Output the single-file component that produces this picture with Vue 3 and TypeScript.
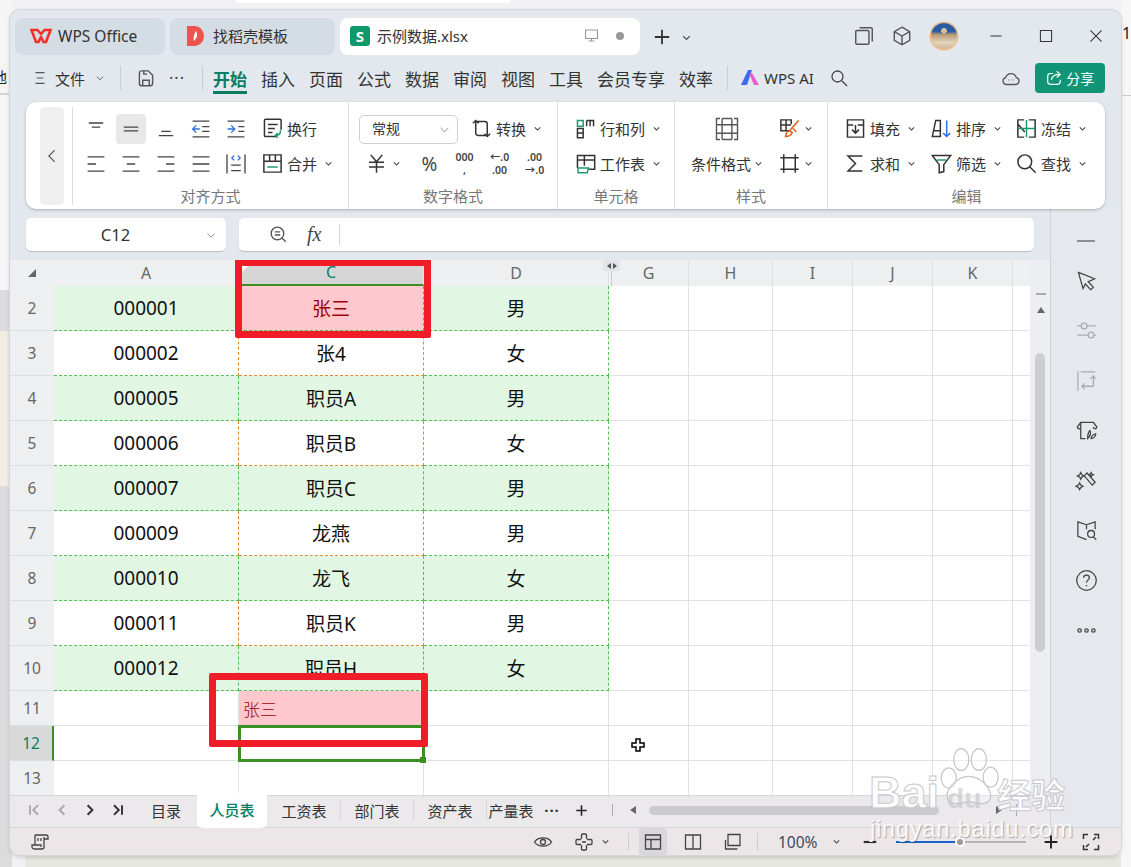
<script setup lang="ts">
import { h } from 'vue'

// icon table: [path, optional colour]
const BLUE = '#2f6fe0'
const GREEN = '#1f9a6c'
const ORANGE = '#d9601a'
const icons: Record<string, [string, string?][]> = {
  caret: [['M4 7.5l6 6 6-6']],
  chevL: [['M13 3.5l-6.5 6.5 6.5 6.5']],
  menu: [['M5 4h10M6.5 10h7M5 16h10']],
  save: [['M4 5.5a2 2 0 0 1 2-2h6l4 4v7.500a2 2 0 0 1-2 2H6a2 2 0 0 1-2-2zM7 17v-5h6v5M8 3.500v3h3']],
  plus: [['M2 10h16M10 2v16']],
  max: [['M3 3h14v14H3z']],
  min: [['M3 10h14']],
  close: [['M3 3l14 14M17 3L3 17']],
  monitor: [['M3 3.500h14v10H3zM10 13.500v3M6.500 16.500h7']],
  copy: [['M6 2.500h10.500a1 1 0 0 1 1 1V15M2.500 6a1 1 0 0 1 1-1h10a1 1 0 0 1 1 1v10.500a1 1 0 0 1-1 1h-10a1 1 0 0 1-1-1z']],
  cube: [['M10 2l7 4v8l-7 4-7-4V6zM3 6l7 4 7-4M10 10v8']],
  search: [['M8.500 3a5.500 5.500 0 1 0 0 11 5.500 5.500 0 0 0 0-11zM12.500 12.500L18 18']],
  cloud: [['M5.500 16.500a3.500 3.500 0 0 1-.800-6.900 5.500 5.500 0 0 1 10.600 0 3.500 3.500 0 0 1-.800 6.900z'], ['M7 12h.500M9.800 12h.500M12.500 12h.500']],
  share: [['M9 5H6a3 3 0 0 0-3 3v6a3 3 0 0 0 3 3h8a3 3 0 0 0 3-3v-2M7 12c1-4 4-6 9-6M13 2.500L17 6l-4 3.500']],
  alTop: [['M4 5h12M6.500 8.500h7']],
  alMid: [['M4 8.500h12M4 11.500h12']],
  alBot: [['M6 12h8M4 15.500h12']],
  indL: [['M3 3.500h14M3 16.500h14M11 8h6M11 12h6'], ['M9 10H3M6 7l-3 3 3 3', BLUE]],
  indR: [['M3 3.500h14M3 16.500h14M12 8h5M12 12h5'], ['M3 10h6M6 7l3 3-3 3', BLUE]],
  left: [['M3 4h14M3 10h7M3 16h14']],
  center: [['M3 4h14M6.500 10h7M3 16h14']],
  right: [['M3 4h14M10 10h7M3 16h14']],
  just: [['M3 4h14M3 10h14M3 16h14']],
  dist: [['M2.500 2v16M17.500 2v16M6 11h8M6 15.500h8'], ['M8.500 3L6.500 5l2 2M11.500 3l2 2-2 2', BLUE]],
  wrap: [['M14 17H4a1 1 0 0 1-1-1V3a1 1 0 0 1 1-1h12.500a1 1 0 0 1 1 1v8M6 6.500h8.500M6 10h6M6 13.500h4'], ['M17 11.500c0 3-1 4.500-4 4.500M14.500 14l-2 2 2 2', GREEN]],
  merge: [['M2.500 2.500h15v15h-15zM2.500 8h15M7.500 2.500V8M12.500 2.500V8'], ['M5.500 13h9', GREEN]],
  convert: [['M5 3v11a2 2 0 0 0 2 2h9M2.500 5.500L5 3l2.500 2.500M15 17V6a2 2 0 0 0-2-2H5M17.500 14.500L15 17l-2.500-2.500']],
  yen: [['M5 2.500l5 6 5-6M3.500 9h13M3.500 13h13M10 9v9']],
  rowcol: [['M8 10H3V18H8zM3 14h5M11 3h6v5M14 3v5M11 3v5'], ['M3 3h5v5H3z', GREEN]],
  sheet: [['M3 14V3h15v12H13M3 7h15M9 3v9'], ['M3.500 14h9l-1 4h-8z', GREEN]],
  cond: [['M5 2.500H2.500v15H5M15 2.500h2.500v15H15M6.500 2.500h7M6.500 17.500h7M2.500 7h4M2.500 13h4M6.500 2.500v15M13.500 2.500v15M17.500 7h-4M17.500 13h-4M6.500 7h7v6h-7']],
  brush: [['M11 12H2.500V2.500h9V6M2.500 7h9M7 2.500V12'], ['M18 3l-8 9M10 12c-2 0-3 2-3.500 5 3 0 5-1 6-3.500zM13 10l3 3', ORANGE]],
  border: [['M5 2v16M15 2v16M2 5h16M2 15h16']],
  fill: [['M3 2.500h14v15H3zM3 7h5M12 7h5M10 7v7M7 11l3 3 3-3']],
  sort: [['M2 17L5 3h4v14zM3 12h6'], ['M14.500 3v14M11.500 14l3 3 3-3', BLUE]],
  freeze: [['M8 2.500H2.500v15H8M12 2.500h5.500v15H12M2.500 6l6 7'], ['M2.500 10h15M10 2.500v15', GREEN]],
  sum: [['M16 3.500H3.500L10 10l-6.500 6.500H16']],
  filter: [['M2 3h16l-6 8v6l-4 1v-7z'], ['M6 7h8', GREEN]],
  find: [['M8.500 2.500a6 6 0 1 0 0 12 6 6 0 0 0 0-12zM13 13l5 5']],
  zoomf: [['M9 3a6 6 0 1 0 0 12A6 6 0 0 0 9 3zM13.500 13.500L17 17M6.500 7.500h5M6.500 10.500h5']],
  pointer: [['M3 3l14 5.500-5.500 2.500 4.500 5-2.500 2-4.500-5-2 4z']],
  sliders: [['M2 6h4M10 6h8M2 14h10M16 14h2M8 3.500a2.500 2.500 0 1 0 0 5 2.500 2.500 0 0 0 0-5zM14 11.500a2.500 2.500 0 1 0 0 5 2.500 2.500 0 0 0 0-5z']],
  swap: [['M2.500 2v17M5 2.500h12.500M16 15V6M13.500 8.500L16 6l2 2.500M16 15H6M8.500 12.500L6 15l2.500 2.500']],
  shop: [['M5 8V3h11l3 4c0 2-3 2-3 0M5 3L2 7c0 2 3 2 3 0M5 8v9h4M11 17c0-4 1-6 2-7 1 2 0 5-2 7zM14 17c0-2 2-4 4-4 0 2-2 4-4 4z']],
  wand: [['M8 6l2.500-2.500 7 8L15 14zM5 3l1 2 2 1-2 1-1 2-1-2-2-1 2-1zM14 3l.700 1.500L16 5l-1.300.7L14 7l-.700-1.300L12 5l1.300-.5zM4 12l1 2 2 1-2 1-1 2-1-2-2-1 2-1z']],
  book: [['M10 5L2.500 2.500V15l7.500 3M10 5l7.500-2.500V9M10 5v4M14 10a3 3 0 1 0 0 6 3 3 0 0 0 0-6zM16 15.500L18.500 18']],
  help: [['M10 1.500a8.500 8.500 0 1 0 0 17 8.500 8.500 0 0 0 0-17zM7.500 7.500C7.500 4.500 12.500 4.500 12.500 7.500c0 2-2.500 2-2.500 4.500M10 14v1']],
  more: [['M4 8.500a1.500 1.500 0 1 0 0 3 1.500 1.500 0 0 0 0-3zM10 8.500a1.500 1.500 0 1 0 0 3 1.500 1.500 0 0 0 0-3zM16 8.500a1.500 1.500 0 1 0 0 3 1.500 1.500 0 0 0 0-3z']],
  script: [['M5 3h11a2 2 0 0 1 2 2v2h-4M14 5v10a2 2 0 0 1-2 2H4a2 2 0 0 1-2-2v-2h9v2M5 3v10M8 6v3M11 6v3']],
  navFirst: [['M5 4v12M15 4l-6 6 6 6']],
  navPrev: [['M13 4l-6 6 6 6']],
  navNext: [['M7 4l6 6-6 6']],
  navLast: [['M15 4v12M5 4l6 6-6 6']],
  eye: [['M1.500 10C5 4.500 15 4.500 18.500 10 15 15.500 5 15.500 1.500 10zM10 7.500a2.500 2.500 0 1 0 0 5 2.500 2.500 0 0 0 0-5z']],
  focus: [['M7.500 7V3a1 1 0 0 1 1-1h3a1 1 0 0 1 1 1v4M7.500 13v4a1 1 0 0 0 1 1h3a1 1 0 0 0 1-1v-4M7 7.500H3a1 1 0 0 0-1 1v3a1 1 0 0 0 1 1h4M13 7.500h4a1 1 0 0 1 1 1v3a1 1 0 0 1-1 1h-4M8 10h4']],
  vNormal: [['M2.500 3h15v14h-15zM2.500 7.500h15M8 7.500V17']],
  vSplit: [['M2.500 3h15v14h-15zM10 3v14']],
  vPage: [['M5 2.500h12v11H5zM2.500 8v9h12']],
  full: [['M2.500 7V2.500H7M13 2.500h4.500V7M17.500 13v4.500H13M7 17.500H2.500V13M5 15l3-3M15 5l-3 3']]
}

// small functional icon, keeps the template readable
const Ico = (p: { n: string; s?: number; w?: number }) =>
  h('svg', { width: p.s ?? 20, height: p.s ?? 20, viewBox: '0 0 20 20', 'stroke-width': p.w ?? 1.3, class: 'ico' },
    (icons[p.n] ?? []).map(([d, c]) => h('path', { d, fill: 'none', stroke: c ?? 'currentColor' })))
Ico.props = ['n', 's', 'w']

const menus = ['插入', '页面', '公式', '数据', '审阅', '视图', '工具', '会员专享', '效率']

const columns = ['A', 'C', 'D', 'G', 'H', 'I', 'J', 'K', '']

const rows = [
  { n: 2, a: '000001', c: '张三', d: '男' },
  { n: 3, a: '000002', c: '张4', d: '女' },
  { n: 4, a: '000005', c: '职员A', d: '男' },
  { n: 5, a: '000006', c: '职员B', d: '女' },
  { n: 6, a: '000007', c: '职员C', d: '男' },
  { n: 7, a: '000009', c: '龙燕', d: '男' },
  { n: 8, a: '000010', c: '龙飞', d: '女' },
  { n: 9, a: '000011', c: '职员K', d: '男' },
  { n: 10, a: '000012', c: '职员H', d: '女' }
]
const emptyCols = 6

const alignTools = ['alTop', 'alMid', 'alBot', 'indL', 'indR', 'left', 'center', 'right', 'just', 'dist']
const sideIcons = [
  { n: 'pointer', muted: false },
  { n: 'sliders', muted: true },
  { n: 'swap', muted: true },
  { n: 'shop', muted: false },
  { n: 'wand', muted: false },
  { n: 'book', muted: false },
  { n: 'help', muted: false },
  { n: 'more', muted: false }
]
const sheets = ['工资表', '部门表', '资产表']
</script>

<template>
  <div class="page">
    <!-- windows behind the WPS window -->
    <div class="behind-top"></div>
    <div class="behind-left">
      <span class="behind-char">地</span>
      <i class="b1"></i><i class="b2"></i><i class="b3"></i>
    </div>
    <div class="behind-right"><span>10</span><i></i></div>
    <div class="behind-bottom"></div>

    <div class="win">
      <header class="titlebar">
        <div class="tab">
          <svg width="22" height="16" viewBox="0 0 22 16"><path d="M1.500 2h6l3.500 4 3.500-4h6L16 14h-2.500L11 9l-2.500 5H6z" fill="none" stroke="#f0302a" stroke-width="2.600"/></svg>
          <span>WPS Office</span>
        </div>
        <div class="tab tab-docer">
          <svg width="19" height="22" viewBox="0 0 19 22"><path d="M1 1h8a9 10 0 0 1 0 20H1z" fill="#ee5350"/><path d="M10 6c2 3 1 7-2 10-1-3 0-7 2-10z" fill="#fff"/></svg>
          <span>找稻壳模板</span>
        </div>
        <div class="tab tab-on">
          <span class="xls-logo">S</span>
          <span>示例数据.xlsx</span>
          <Ico class="tab-mon" n="monitor" :s="17" />
          <i class="tab-dot"></i>
        </div>
        <Ico class="tab-plus" n="plus" :s="18" :w="2" />
        <Ico class="tab-caret" n="caret" :s="11" :w="2" />
        <div class="win-tools">
          <Ico n="copy" />
          <Ico n="cube" />
          <span class="avatar"></span>
        </div>
        <div class="win-ctl">
          <Ico n="min" :s="16" /><Ico n="max" :s="16" /><Ico n="close" :s="16" />
        </div>
      </header>

      <nav class="menubar">
        <Ico class="m-ham" n="menu" :s="18" />
        <span class="m-file">文件</span>
        <Ico class="m-caret" n="caret" :s="10" :w="1.800" />
        <i class="m-div m-div1"></i>
        <Ico class="m-save" n="save" :s="22" />
        <span class="m-dots">···</span>
        <i class="m-div m-div2"></i>
        <span class="m-item m-on">开始</span>
        <span v-for="m in menus" :key="m" class="m-item">{{ m }}</span>
        <i class="m-div m-div3"></i>
        <svg class="m-ai" width="20" height="18" viewBox="0 0 20 18">
          <path d="M1 16L8 1h4L7 16z" fill="#3d6cf0"/><path d="M9 4h3l7 12h-5z" fill="#e55bd0"/>
        </svg>
        <span class="m-aitxt">WPS AI</span>
        <Ico class="m-search" n="search" />
        <Ico class="m-cloud" n="cloud" />
        <button class="m-share" type="button"><Ico n="share" :s="18" />分享</button>
      </nav>

      <section class="ribbon">
        <div class="collapse"><Ico n="chevL" :s="18" /></div>
        <div class="rib-div"></div>

        <!-- 对齐方式 -->
        <div class="grp grp-align">
          <div class="align-body">
            <div class="align-grid">
              <span v-for="t in alignTools" :key="t" class="ic-btn" :class="{ 'ic-on': t === 'alMid' }"><Ico :n="t" :s="24" :w="1.100" /></span>
            </div>
            <div class="tool-col">
              <span class="tool"><Ico n="wrap" />换行</span>
              <span class="tool"><Ico n="merge" />合并<Ico n="caret" :s="9" :w="2.400" /></span>
            </div>
          </div>
          <div class="grp-label">对齐方式</div>
        </div>

        <!-- 数字格式 -->
        <div class="grp grp-num">
          <div class="num-row">
            <div class="fmt-select"><span>常规</span><Ico n="caret" :s="13" /></div>
            <span class="tool num-conv"><Ico n="convert" />转换<Ico n="caret" :s="9" :w="2.400" /></span>
          </div>
          <div class="num-row num-row2">
            <span class="tool num-yen"><Ico n="yen" /><Ico n="caret" :s="9" :w="2.400" /></span>
            <span class="num-sym num-pct">%</span>
            <span class="num-sym num-th">000<br />,</span>
            <span class="num-sym num-dec">←.0<br />.00</span>
            <span class="num-sym num-dec">.00<br />→.0</span>
          </div>
          <div class="grp-label">数字格式</div>
        </div>

        <!-- 单元格 -->
        <div class="grp grp-cell">
          <span class="tool"><Ico n="rowcol" />行和列<Ico n="caret" :s="9" :w="2.400" /></span>
          <span class="tool"><Ico n="sheet" />工作表<Ico n="caret" :s="9" :w="2.400" /></span>
          <div class="grp-label">单元格</div>
        </div>

        <!-- 样式 -->
        <div class="grp grp-style">
          <div class="style-body">
            <div class="style-cond">
              <Ico class="cond-ic" n="cond" :s="28" :w="1" />
              <span class="tool tool-tight">条件格式<Ico n="caret" :s="9" :w="2.400" /></span>
            </div>
            <div class="tool-col style-side">
              <span class="tool tool-icon"><Ico n="brush" /><Ico n="caret" :s="9" :w="2.400" /></span>
              <span class="tool tool-icon"><Ico n="border" /><Ico n="caret" :s="9" :w="2.400" /></span>
            </div>
          </div>
          <div class="grp-label">样式</div>
        </div>

        <!-- 编辑 -->
        <div class="grp grp-edit">
          <div class="edit-grid">
            <span class="tool"><Ico n="fill" />填充<Ico n="caret" :s="9" :w="2.400" /></span>
            <span class="tool"><Ico n="sort" />排序<Ico n="caret" :s="9" :w="2.400" /></span>
            <span class="tool"><Ico n="freeze" />冻结<Ico n="caret" :s="9" :w="2.400" /></span>
            <span class="tool"><Ico n="sum" />求和<Ico n="caret" :s="9" :w="2.400" /></span>
            <span class="tool"><Ico n="filter" />筛选<Ico n="caret" :s="9" :w="2.400" /></span>
            <span class="tool"><Ico n="find" />查找<Ico n="caret" :s="9" :w="2.400" /></span>
          </div>
          <div class="grp-label">编辑</div>
        </div>
      </section>

      <div class="body">
        <div class="main">
          <div class="formula">
            <div class="namebox"><span>C12</span><Ico n="caret" :s="12" /></div>
            <div class="fx-box">
              <Ico class="fx-zoom" n="zoomf" :s="21" />
              <span class="fx-txt">fx</span>
              <i class="fx-div"></i>
            </div>
          </div>

          <div class="gridwrap">
            <div class="table">
              <div class="row row-head">
                <div class="corner"><i></i></div>
                <div v-for="c in columns" :key="c" class="col-h" :class="{ 'col-on': c === 'C' }">{{ c }}</div>
              </div>
              <div v-for="r in rows" :key="r.n" class="row" :class="r.n % 2 === 0 ? 'data-even' : 'data-odd'">
                <div class="row-h">{{ r.n }}</div>
                <div class="cell d a">{{ r.a }}</div>
                <div class="cell d c" :class="{ bad: r.n === 2 }">{{ r.c }}</div>
                <div class="cell d last">{{ r.d }}</div>
                <div v-for="i in emptyCols" :key="i" class="cell"></div>
              </div>
              <div v-for="n in [11, 12, 13]" :key="n" class="row row-low">
                <div class="row-h" :class="{ 'row-on': n === 12 }">{{ n }}</div>
                <div class="cell"></div>
                <div class="cell" :class="{ 'bad-left': n === 11, selected: n === 12 }">{{ n === 11 ? '张三' : '' }}</div>
                <div class="cell"></div>
                <div v-for="i in emptyCols" :key="i" class="cell"></div>
              </div>
            </div>
            <aside class="vscroll">
              <i class="vs-dash"></i>
              <i class="vs-up"></i>
              <i class="vs-thumb"></i>
            </aside>
            <!-- annotation boxes drawn on top of the sheet -->
            <i class="mark mark-1"></i>
            <i class="mark mark-2"></i>
            <i class="sel-notch"></i>
            <span class="col-resize"><i></i><i></i></span>
          </div>

          <div class="sheetbar">
            <div class="nav">
              <span class="muted"><Ico n="navFirst" :s="16" :w="2.400" /></span>
              <span class="muted"><Ico n="navPrev" :s="16" :w="2.400" /></span>
              <span><Ico n="navNext" :s="16" :w="2.400" /></span>
              <span><Ico n="navLast" :s="16" :w="2.400" /></span>
            </div>
            <span class="sh sh-first">目录</span>
            <span class="sh sh-on">人员表</span>
            <span v-for="s in sheets" :key="s" class="sh sh-line">{{ s }}</span>
            <span class="sh sh-cut">产量表</span>
            <span class="sh-more">···</span>
            <Ico class="sh-plus" n="plus" :s="13" :w="2.400" />
            <i class="sh-div"></i>
            <i class="tri-l"></i>
            <div class="hscroll"><i></i></div>
            <i class="tri-r"></i>
            <i class="sh-div sh-div2"></i>
          </div>
        </div>

        <aside class="side">
          <i class="side-dash"></i>
          <span v-for="s in sideIcons" :key="s.n" class="side-ic" :class="{ muted: s.muted }"><Ico :n="s.n" :s="23" :w="1.100" /></span>
        </aside>
      </div>

      <footer class="status">
        <Ico class="st-script" n="script" :s="20" />
        <Ico class="st-eye" n="eye" />
        <Ico class="st-focus" n="focus" />
        <Ico class="st-caret" n="caret" :s="9" :w="2.400" />
        <i class="st-div st-div1"></i>
        <span class="st-view st-view-on"><Ico n="vNormal" /></span>
        <span class="st-view"><Ico n="vSplit" /></span>
        <span class="st-view"><Ico n="vPage" /></span>
        <i class="st-div st-div2"></i>
        <span class="st-zoom">100%</span>
        <Ico class="st-caret2" n="caret" :s="9" :w="2.400" />
        <Ico class="st-minus" n="min" :s="18" :w="2.400" />
        <div class="st-slider"><i class="st-fill"></i><i class="st-knob"></i></div>
        <Ico class="st-plus" n="plus" :s="16" :w="2.400" />
        <Ico class="st-full" n="full" :s="20" :w="1.500" />
      </footer>
    </div>

    <!-- mouse cursor in the sheet -->
    <svg class="cursor" width="14" height="14" viewBox="0 0 14 14">
      <path d="M5 1h4v4h4v4H9v4H5V9H1V5h4z" fill="#fff" stroke="#000" stroke-width="1.500"/>
    </svg>

    <!-- image watermark -->
    <div class="wm">
      <svg class="wm-paw" width="62" height="66" viewBox="0 0 74 72">
        <g fill="rgba(255,255,255,.35)" stroke="#c6c6ca" stroke-width="1.500">
          <ellipse cx="14" cy="36" rx="9" ry="12"/><ellipse cx="29" cy="14" rx="9" ry="13"/>
          <ellipse cx="50" cy="14" rx="9" ry="13"/><ellipse cx="64" cy="35" rx="9" ry="12"/>
          <path d="M38 34c12 0 26 12 26 24 0 10-14 10-26 6-12 4-26 4-26-6 0-12 14-24 26-24z"/>
        </g>
      </svg>
      <div class="wm-line1"><span>Bai</span><span class="wm-du">du</span><span class="wm-cn">经验</span></div>
      <div class="wm-line2">jingyan.baidu.com</div>
    </div>
  </div>
</template>

<style>
html, body { margin: 0; background: #f1f1f4; }
</style>

<style scoped>
.page {
  position: relative;
  width: 1131px;
  height: 867px;
  overflow: hidden;
  background: #f1f1f4;
  font-family: "Noto Sans", "Noto Sans CJK SC", sans-serif;
  color: #333;
}

/* ---------- behind ---------- */
.behind-top {
  position: absolute; left: 235px; top: 0; width: 276px; height: 3px;
  background: #fff; border-radius: 0 0 4px 4px;
}
.behind-left { position: absolute; left: 0; top: 0; width: 12px; height: 867px; background: #f5f5f6; }
.behind-left .behind-char { position: absolute; left: -8px; top: 66px; font-size: 15px; color: #222; }
.behind-left i { position: absolute; left: 0; width: 12px; display: block; }
.behind-left .b1 { top: 93px; height: 2px; background: #d5d5d5; }
.behind-left .b2 { top: 290px; height: 41px; background: #dcdcdc; }
.behind-left .b3 { top: 331px; height: 155px; background: #f3ece2; box-shadow: 0 155px 0 #dcdcdc, 0 310px 0 #dcdcdc, 0 381px 0 #dcdcdc; }
.behind-right { position: absolute; right: 0; top: 0; width: 10px; height: 867px; background: #f6f6f7; }
.behind-right span { position: absolute; left: 1px; top: 22px; font-size: 16px; color: #222; }
.behind-right i { position: absolute; left: 0; top: 95px; width: 10px; height: 1px; background: #ccc; display: block; }
.behind-bottom { position: absolute; left: 25px; right: 10px; top: 855px; height: 12px; background: #e6e6e1; }

/* ---------- window ---------- */
.win {
  position: absolute;
  left: 10px; top: 10px;
  width: 1111px; height: 845px;
  display: flex;
  flex-direction: column;
  border-radius: 10px;
  overflow: hidden;
  background: linear-gradient(180deg, #e2e8ee 0%, #e5e8ee 60%, #ece6e8 100%);
  box-shadow: 0 0 0 1px #d3d7dc, 0 2px 4px rgba(0, 0, 0, .18);
}

.ico { display: block; flex: none; }

/* ---------- title bar ---------- */
.titlebar { height: 50px; flex: none; display: flex; align-items: flex-start; padding: 8px 0 0 5px; box-sizing: border-box; }
.tab {
  width: 150px; height: 37px;
  display: flex; align-items: center; gap: 6px;
  padding: 0 0 2px 15px; box-sizing: border-box;
  background: #d5dde4; border-radius: 8px;
  font-size: 15.500px; color: #333;
}
.tab-docer { width: 165px; margin-left: 5px; padding-left: 16px; gap: 8px; font-size: 15px; }
.tab-on { width: 300px; margin-left: 5px; padding-left: 10px; gap: 7px; background: #fff; font-size: 15px; }
.xls-logo {
  width: 20px; height: 20px; border-radius: 3px;
  background: #0f9a6c; color: #fff;
  font: 700 15px/20px "Noto Sans", sans-serif; text-align: center;
}
.tab-mon { margin-left: auto; color: #999; }
.tab-dot { width: 8px; height: 8px; border-radius: 50%; background: #999; margin: 0 16px 0 9px; }
.tab-plus { margin: 10px 0 0 13px; color: #333; }
.tab-caret { margin: 14px 0 0 10px; color: #444; }
.win-tools { display: flex; align-items: center; gap: 18px; margin: 5px 0 0 162px; color: #555; }
.win-tools .ico { transform: scale(1.100); }
.avatar {
  width: 26px; height: 26px; border-radius: 50%;
  background:
    radial-gradient(circle at 50% 30%, #d8c09c 0 12%, transparent 13%),
    linear-gradient(180deg, #2b5ba5 0 32%, #b89a74 45%, #e4d4bd 75%, #cdb796 100%);
  box-shadow: 0 0 0 1.500px #eebb7a;
  margin-left: 1px;
}
.win-ctl { display: flex; gap: 34px; margin: 10px 0 0 31px; color: #333; }

/* ---------- menu ---------- */
.menubar { height: 42px; flex: none; display: flex; align-items: center; padding: 0 0 6px 21px; box-sizing: border-box; font-size: 17px; color: #333; }
.m-ham { color: #555; }
.m-file { font-size: 15px; margin-left: 6px; }
.m-caret { margin: 0 0 0 10px; color: #555; }
.m-div { width: 1px; height: 24px; background: #c8ced4; display: block; flex: none; }
.m-div1 { margin-left: 15px; }
.m-save { margin-left: 14px; color: #555; }
.m-dots { width: 20px; margin-left: 10px; font-size: 16px; color: #444; letter-spacing: 1px; text-align: center; }
.m-div2 { margin-left: 15px; margin-right: 10px; }
.m-item { margin-right: 14px; white-space: nowrap; position: relative; }
.m-on { color: #0a7d63; font-weight: 700; }
.m-on::after { content: ""; position: absolute; left: 0; right: 0; bottom: -3px; height: 2.500px; background: #0a7d63; }
.m-div3 { margin-left: 0; }
.m-ai { margin-left: 12px; }
.m-aitxt { margin-left: 4px; font-size: 15px; white-space: nowrap; }
.m-search { margin-left: 15px; color: #444; }
.m-cloud { margin-left: 152px; color: #555; }
.m-share {
  margin-left: 14px; width: 70px; height: 30px;
  display: flex; align-items: center; justify-content: center; gap: 3px;
  border: 0; border-radius: 4px; background: #129577; color: #fff;
  font: 14px "Noto Sans", "Noto Sans CJK SC", sans-serif;
}

/* ---------- ribbon ---------- */
.ribbon {
  width: 1079px; height: 107px;
  flex: none; margin-left: 16px;
  display: flex; position: relative; z-index: 2;
  background: #fff; border-radius: 10px;
  box-shadow: 0 1px 3px rgba(0, 0, 0, .25);
}
.collapse {
  width: 24px; height: 98px;
  margin: 5px 0 0 14px;
  display: flex; align-items: center; justify-content: center;
  background: #efefef; border-radius: 5px; color: #555;
}
.rib-div { width: 1px; height: 98px; margin: 5px 0 0 8px; background: #ddd; }
.grp { position: relative; height: 107px; box-sizing: border-box; border-right: 1px solid #dedede; font-size: 15px; line-height: 20px; color: #333; }
.grp:last-child { border-right: 0; }
.grp-label { position: absolute; left: 0; right: 0; top: 85px; text-align: center; font-size: 15px; line-height: 19px; color: #777; }
.tool { display: flex; align-items: center; gap: 5px; height: 30px; white-space: nowrap; padding-bottom: 1px; box-sizing: border-box; }
/* leading tool icon is drawn larger than its 20px slot */
.tool > .ico:first-child { width: 23px; height: 23px; margin: 0 -1.500px; }
.tool .ico:last-child:not(:first-child) { margin-left: 2px; color: #444; }
.tool-tight > .ico:first-child { width: 9px; height: 9px; margin: 0 0 0 2px; color: #444; }
.tool-col { display: flex; flex-direction: column; gap: 5px; }

.grp-align { width: 276px; padding: 12px 0 0 8px; }
.align-body { display: flex; }
.align-grid { display: grid; grid-template-columns: repeat(5, 30px); grid-auto-rows: 30px; gap: 5px; }
.ic-btn { display: flex; align-items: center; justify-content: center; color: #444; border-radius: 4px; }
.ic-on { background: #e8e8e8; }
.align-body .tool-col { margin-left: 11px; }

.grp-num { width: 209px; padding: 12px 0 0 10px; }
.num-row { display: flex; align-items: center; height: 30px; }
.num-row2 { margin-top: 5px; }
.fmt-select {
  width: 99px; height: 29px; box-sizing: border-box;
  display: flex; align-items: center; justify-content: space-between;
  padding: 0 6px 0 12px;
  border: 1px solid #cfcfcf; border-radius: 5px; color: #333; font-size: 14px;
}
.fmt-select .ico { color: #777; }
.num-conv { margin-left: 13px; }
.num-yen { width: 46px; margin-left: 7px; gap: 4px; }
.num-sym { display: block; width: 35px; text-align: center; color: #444; }
.num-pct { font-size: 19px; line-height: 24px; }
.num-th, .num-dec { font-size: 10.500px; line-height: 13px; font-weight: 600; white-space: nowrap; }

.grp-cell { width: 117px; padding: 12px 0 0 17px; display: flex; flex-direction: column; gap: 5px; }

.grp-style { width: 153px; padding: 12px 0 0 15px; }
.style-body { display: flex; }
.style-cond { width: 87px; display: flex; flex-direction: column; align-items: flex-start; }
.cond-ic { margin: 1px 0 6px 23px; color: #555; }
.tool-tight { gap: 1px; margin-left: 1px; }
.style-side { margin-left: 2px; }
.tool-icon { gap: 3px; }

.grp-edit { flex: 1; padding: 12px 0 0 17px; }
.edit-grid { display: grid; grid-template-columns: 86px 85px auto; grid-auto-rows: 30px; row-gap: 5px; }

/* ---------- body ---------- */
.body { flex: 1; display: flex; min-height: 0; margin-top: 0; }
.main { width: 1040px; flex: none; display: flex; flex-direction: column; }
.side {
  flex: 1; border-left: 1px solid #cfd2d6;
  display: flex; flex-direction: column; align-items: center;
  padding-top: 31px; box-sizing: border-box;
  background: #e6e8ee;
}
.side-dash { width: 18px; height: 1.500px; background: #8c8f94; display: block; margin-bottom: 13.500px; }
.side-ic { height: 50px; flex: none; display: flex; align-items: center; justify-content: center; color: #444; }
.side-ic.muted { color: #a8abb0; }

/* ---------- formula ---------- */
.formula { height: 51px; flex: none; display: flex; padding: 9px 0 9px 16px; box-sizing: border-box; gap: 13px; }
.namebox, .fx-box { height: 33px; background: #fff; border-radius: 5px; box-shadow: 0 1px 1px rgba(0, 0, 0, .18); }
.namebox { width: 200px; display: flex; align-items: center; padding-right: 9px; box-sizing: border-box; font-size: 16.500px; color: #333; }
.namebox span { flex: 1; text-align: center; }
.namebox .ico { color: #777; }
.fx-box { width: 795px; display: flex; align-items: center; }
.fx-zoom { margin-left: 29px; color: #555; }
.fx-txt { margin-left: 18px; font: italic 20px "Liberation Serif", serif; color: #444; }
.fx-div { width: 1px; height: 21px; margin-left: 18px; background: #d5d5d5; display: block; }

/* ---------- sheet ---------- */
.gridwrap { position: relative; height: 535px; flex: none; display: flex; overflow: hidden; }
.table { width: 1020px; flex: none; background: #fff; }
.row { display: grid; grid-template-columns: 44px 185px 185px 185px 80px 84px 80px 80px 80px 17px; height: 45px; }
.row-head { height: 26px; background: #eeeff1; }
.row-low { height: 35px; }
.corner { position: relative; }
.corner i { position: absolute; left: 18px; top: 9px; border-style: solid; border-width: 0 0 8px 8px; border-color: transparent transparent #666 transparent; }
.col-h { display: flex; align-items: center; justify-content: center; font-size: 16px; color: #666; border-right: 1px solid #dfe1e3; box-sizing: border-box; }
.col-h:last-child { border-right: 0; }
.col-on { background: #d6d6d6; color: #0a7d63; border-bottom: 2px solid #3c8f22; }
.row-h {
  display: flex; align-items: center; justify-content: center;
  background: #eeeff1; color: #666; font-size: 15.500px;
  border-bottom: 1px solid #dcdee0; box-sizing: border-box;
}
.row-on { background: #d9d9d9; color: #0a7d63; border-right: 2.500px solid #3c8f22; }
.cell {
  display: flex; align-items: center; justify-content: center;
  box-sizing: border-box;
  border-right: 1px solid #e2e2e2; border-bottom: 1px solid #e2e2e2;
  font-size: 19px; color: #111; position: relative;
}
.cell:last-child { border-right: 0; }
.cell.d { border-bottom: 1px dashed #52c052; border-right: 1px dashed #52c052; }
.data-even .cell.d { background: #e2f7e3; }
.data-odd .cell.a { border-right: 1px dashed #e08a2e; }
.data-odd .cell.c { border-right: 1px dashed #e08a2e; border-bottom: 1px dashed #e08a2e; }
.cell.bad { background: #ffc7ce !important; color: #9c0006; }
.bad-left { background: #ffc7ce; color: #9c0006; justify-content: flex-start; padding-left: 4px; font-weight: 300; font-size: 17px; }
.selected { outline: 3px solid #3c8f22; outline-offset: -2px; z-index: 1; }
.selected::after { content: ""; position: absolute; right: -3px; bottom: -3px; width: 6px; height: 6px; background: #3c8f22; }

.vscroll { flex: 1; position: relative; background: #eceef1; }
.vscroll i { position: absolute; display: block; }
.vs-dash { left: 6px; top: 33px; width: 10px; height: 1.500px; background: #aaa; }
.vs-up { left: 7px; top: 47px; border-style: solid; border-width: 0 4px 6px 4px; border-color: transparent transparent #666 transparent; }
.vs-thumb { left: 5px; top: 93px; width: 10px; height: 299px; border-radius: 5px; background: #ccced2; }

.mark { position: absolute; display: block; border: 7px solid #f01c28; border-radius: 2px; box-sizing: border-box; z-index: 3; }
.mark-1 { left: 225px; top: -1px; width: 196px; height: 79px; }
.mark-2 { left: 199px; top: 413px; width: 219px; height: 74px; }
.sel-notch { position: absolute; left: 232px; top: 6px; display: block; border-style: solid; border-width: 6px 6px 0 0; border-color: #fff transparent transparent transparent; z-index: 2; }
.col-resize {
  position: absolute; left: 593px; top: 0; width: 17px; height: 11px;
  display: flex; align-items: center; justify-content: center; gap: 2px;
  background: #e2e4e8; border-radius: 2px;
}
.col-resize::after { content: ""; position: absolute; left: 8px; top: 11px; width: 1px; height: 15px; background: #c9cbd0; }
.col-resize i { display: block; border-style: solid; border-width: 3px 4px 3px 0; border-color: transparent #555 transparent transparent; }
.col-resize i + i { border-width: 3px 0 3px 4px; border-color: transparent transparent transparent #555; }

/* ---------- sheet tabs ---------- */
.sheetbar { height: 32px; flex: none; display: flex; align-items: center; padding-bottom: 3px; font-size: 15px; position: relative; background: #ebe9ec; border-top: 1px solid #d6d6d8; box-sizing: border-box; }
.nav { display: flex; width: 112px; margin-left: 10px; color: #333; }
.nav span { width: 28px; display: flex; justify-content: center; }
.nav .muted { color: #a9a9ad; }
.sh { width: 62px; text-align: center; white-space: nowrap; }
.sh-first { margin-left: 3px; }
.sh-on { width: 70px; height: 35px; margin-right: 1px; line-height: 35px; background: #fff; color: #0a7d63; font-weight: 500; border-radius: 0 0 6px 6px; }
.sh-line { width: 73px; border-right: 1px solid #d8d8da; box-sizing: border-box; }
.sh-cut { width: 48px; overflow: hidden; }
.sh-more { width: 30px; margin-left: 2px; text-align: center; letter-spacing: 1px; font-weight: 700; }
.sh-plus { margin-left: 8px; color: #222; }
.sh-div { display: block; width: 1px; height: 12px; background: #aaa; margin-left: 24px; }
.tri-l, .tri-r { display: block; border-style: solid; }
.tri-l { margin-left: 17px; border-width: 4px 6px 4px 0; border-color: transparent #666 transparent transparent; }
.hscroll { width: 340px; margin-left: 13px; height: 9px; }
.hscroll i { display: block; width: 290px; height: 9px; border-radius: 5px; background: #cbcbcd; }
.tri-r { margin-left: 7px; border-width: 4px 0 4px 6px; border-color: transparent transparent transparent #666; }
.sh-div2 { margin-left: 14px; }

/* ---------- status ---------- */
.status { height: 28px; flex: none; display: flex; align-items: center; border-top: 1px solid #d8d6d8; box-sizing: border-box; color: #444; }
.st-script { margin-left: 20px; }
.st-eye { margin-left: 483px; }
.st-focus { margin-left: 21px; }
.st-caret { margin-left: 7px; }
.st-div { display: block; width: 1px; height: 18px; background: #cfcdcf; }
.st-div1 { margin-left: 18px; }
.st-view { width: 28px; height: 27px; display: flex; align-items: center; justify-content: center; }
.st-view-on { margin-left: 10px; background: #d9d7d9; border-radius: 3px; }
.st-view + .st-view { margin-left: 12px; }
.st-div2 { margin-left: 10px; }
.st-zoom { width: 46px; margin-left: 20px; font-size: 15.500px; color: #3a4a5e; }
.st-caret2 { margin-left: 8px; }
.st-minus { margin-left: 20px; color: #333; }
.st-slider { position: relative; width: 130px; height: 2px; margin-left: 17px; background: #b5b5b8; }
.st-fill { position: absolute; left: 0; top: 0; width: 62px; height: 2px; background: #1d63c9; display: block; }
.st-knob { position: absolute; left: 59px; top: -4px; width: 10px; height: 10px; box-sizing: border-box; border-radius: 50%; background: #999; border: 2px solid #fff; display: block; }
.st-plus { margin-left: 17px; color: #222; }
.st-full { margin-left: 22px; color: #333; }

/* ---------- overlays ---------- */
.cursor { position: absolute; left: 631px; top: 738px; z-index: 5; }
.wm { position: absolute; left: 868px; top: 744px; width: 210px; height: 100px; z-index: 6; color: rgba(255, 255, 255, .92); }
.wm-paw { position: absolute; left: 69px; top: 1px; }
.wm-line1 { position: absolute; left: 1px; top: 24px; display: flex; align-items: baseline; font: 700 45px/50px "Liberation Sans", sans-serif; -webkit-text-stroke: 1px #c8c8cc; }
.wm-du { margin-left: 8px; font-size: 28px; color: rgba(200, 200, 204, .7); -webkit-text-stroke: 0; }
.wm-cn { margin-left: 16px; font: 700 34px/50px "Noto Sans CJK SC", sans-serif; }
.wm-line2 { position: absolute; left: 2px; top: 72px; font: 400 24px/26px "Liberation Sans", sans-serif; letter-spacing: .6px; text-shadow: 1px 1px 1px rgba(0, 0, 0, .28); }
</style>
